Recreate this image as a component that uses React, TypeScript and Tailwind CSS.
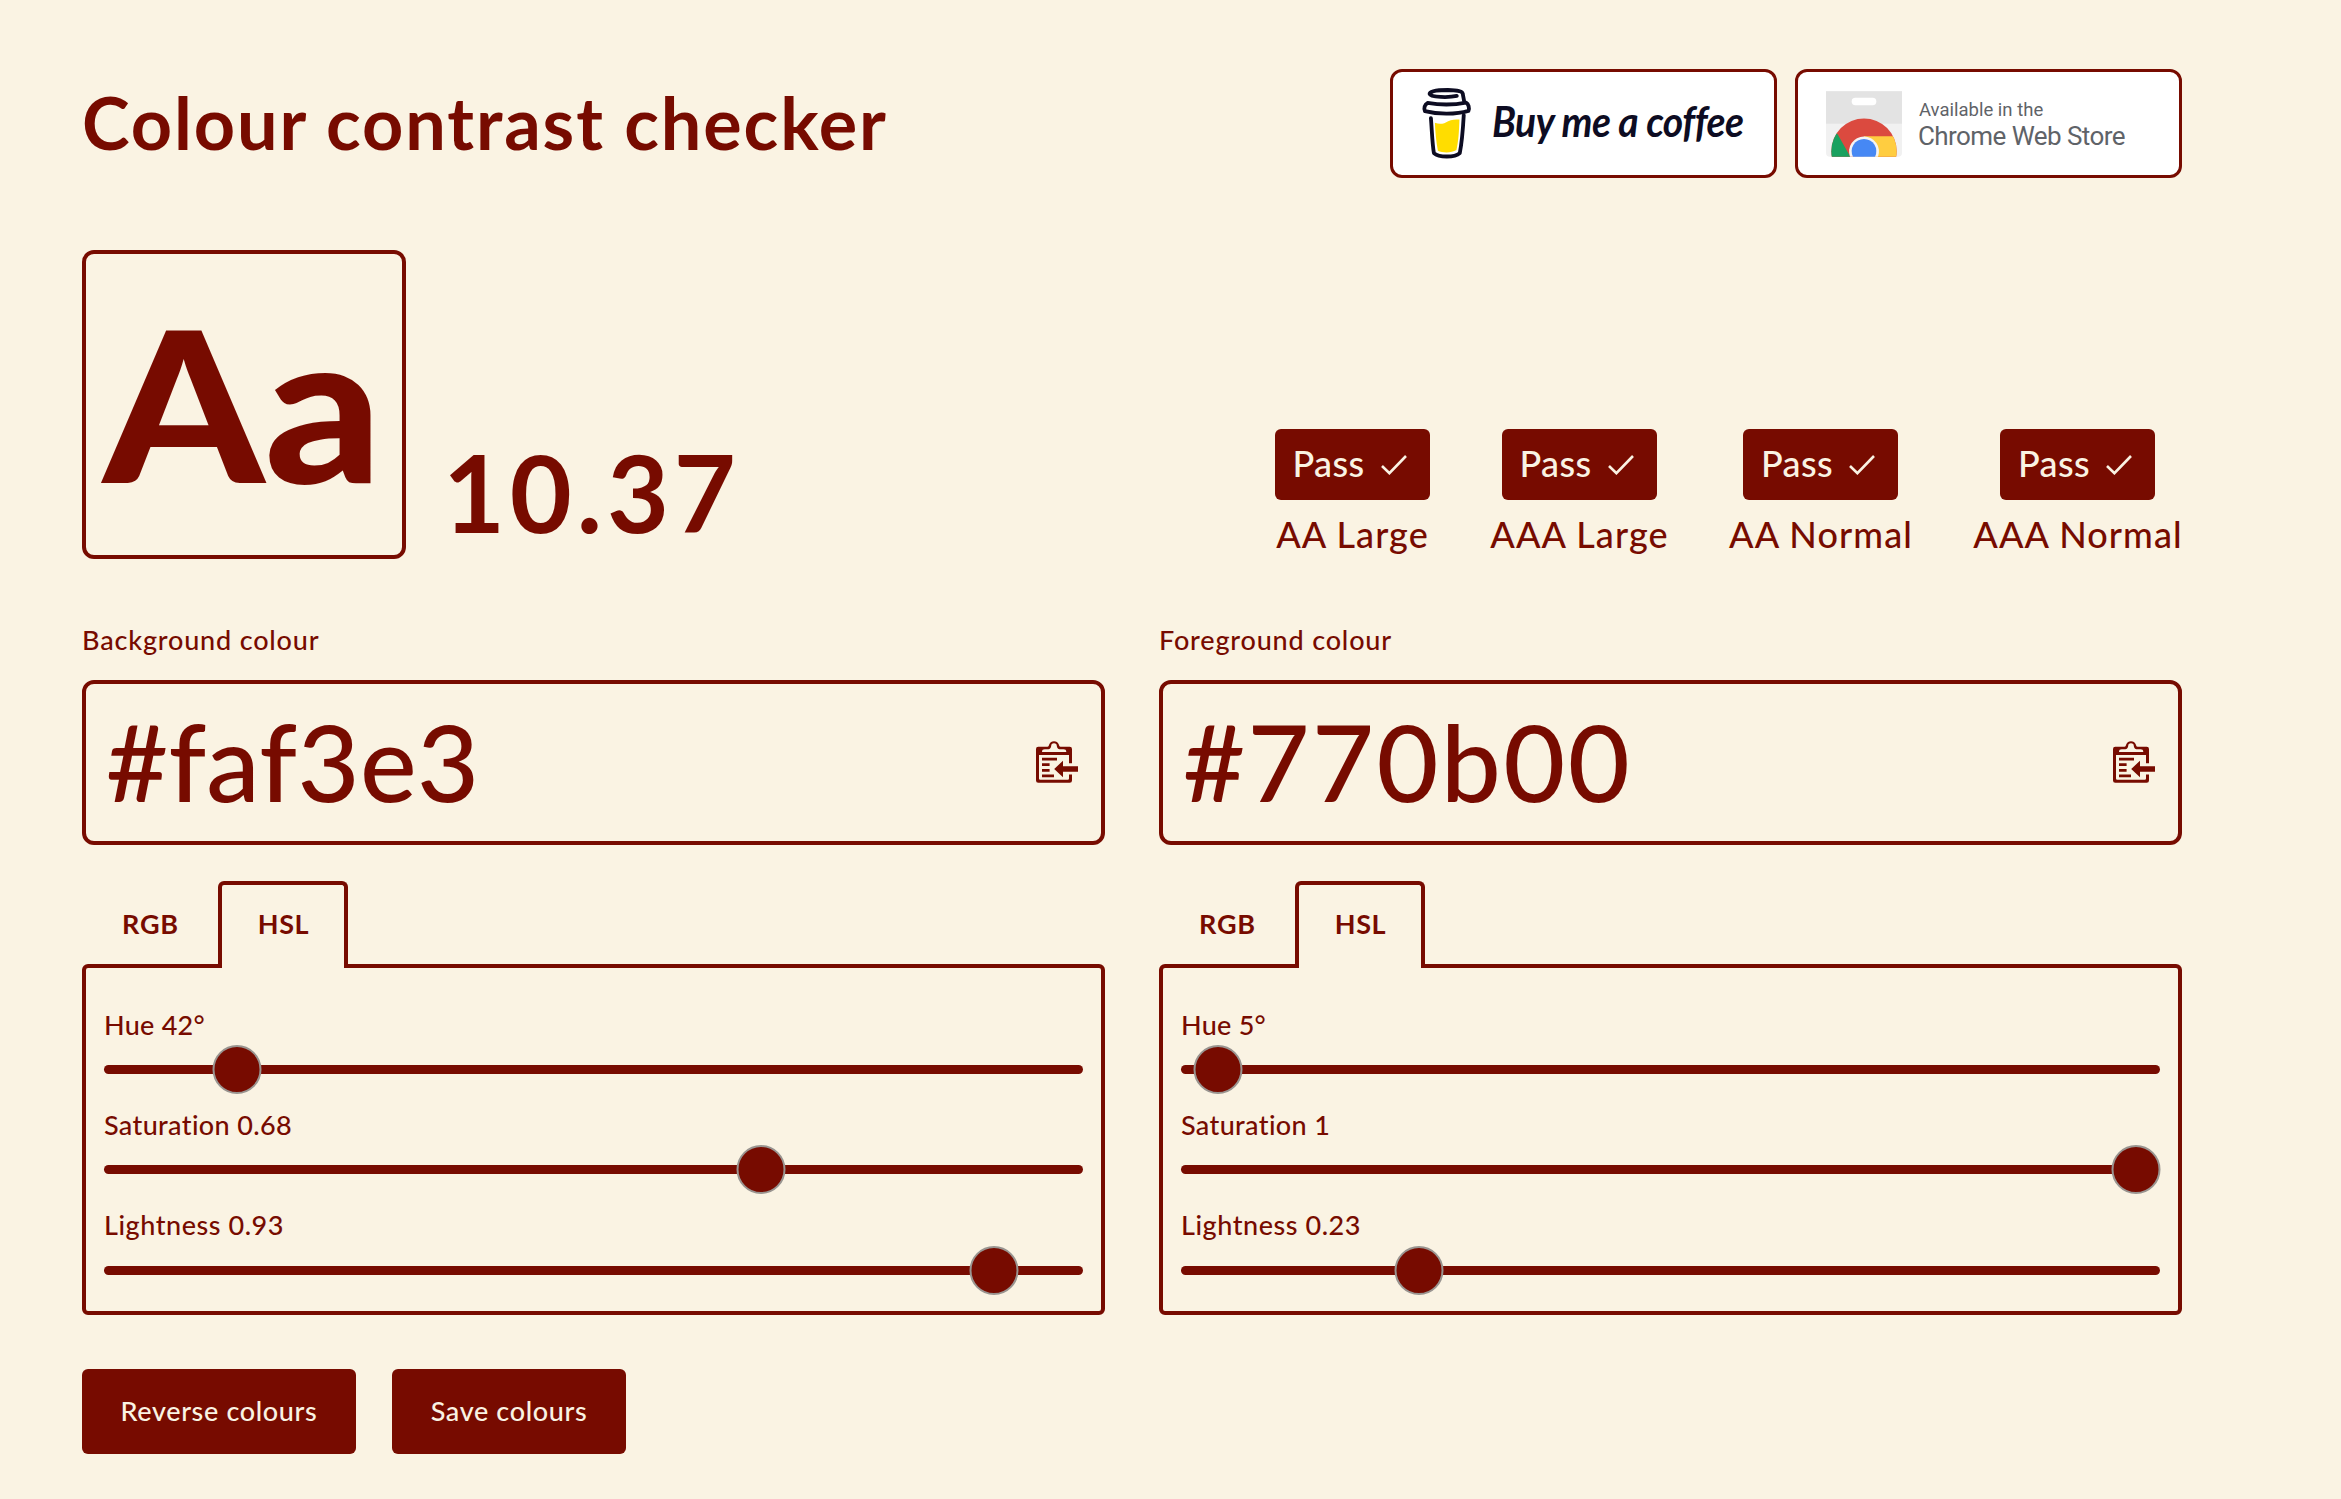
type Slider = { label: string; ratio: number; tracking: string };

type Colour = {
  title: string;
  hex: string;
  hexTracking: string;
  sliders: Slider[];
};

const colours: Colour[] = [
  {
    title: "Background colour",
    hex: "#faf3e3",
    hexTracking: "tracking-[0.4px]",
    sliders: [
      { label: "Hue 42°", ratio: 42 / 360, tracking: "tracking-[0.25px]" },
      { label: "Saturation 0.68", ratio: 0.68, tracking: "tracking-[0.35px]" },
      { label: "Lightness 0.93", ratio: 0.93, tracking: "tracking-[0.55px]" },
    ],
  },
  {
    title: "Foreground colour",
    hex: "#770b00",
    hexTracking: "tracking-[2.4px]",
    sliders: [
      { label: "Hue 5°", ratio: 5 / 360, tracking: "tracking-[0.25px]" },
      { label: "Saturation 1", ratio: 1, tracking: "tracking-[0.35px]" },
      { label: "Lightness 0.23", ratio: 0.23, tracking: "tracking-[0.55px]" },
    ],
  },
];

const levels = [
  { label: "AA Large", width: "w-[154px]" },
  { label: "AAA Large", width: "w-[178px]" },
  { label: "AA Normal", width: "w-[183px]" },
  { label: "AAA Normal", width: "w-[209px]" },
];

function CoffeeCup() {
  return (
    <svg viewBox="125 80 155 220" className="h-[73px] w-[52px] shrink-0" fill="none" stroke="#0d0c22" strokeWidth="11.5" strokeLinecap="round" strokeLinejoin="round">
      <path stroke="none" fill="#ffdd00" d="M166 188C183 194 194 190 206 183C216 178 228 178 240 178C239 212 237 245 231 270C216 279 190 279 175 272C170 245 167 215 166 188Z" />
      <path d="M232 107C210 112 152 112 150 101C150 91 185 89 205 89C235 90 250 93 250 101L254 122" />
      <path d="M144 128C180 134 225 134 260 127C267 131 271 143 267 152C230 163 175 163 136 153C132 145 135 132 144 128Z" />
      <path d="M154 174C157 210 158 250 163 279C178 293 226 293 241 279C247 250 251 200 253 165" />
    </svg>
  );
}

function ChromeBag() {
  return (
    <svg viewBox="123 93 228 197" className="h-[66px] w-[76px] shrink-0">
      <defs>
        <clipPath id="disc">
          <circle cx="237" cy="273" r="98" />
        </clipPath>
      </defs>
      <path fill="#f1f1f1" d="M123 93H351V278Q351 290 339 290H135Q123 290 123 278Z" />
      <path fill="#e3e3e3" d="M123 93H351V191H123Z" />
      <rect x="200" y="113" width="74" height="22" rx="11" fill="#fff" />
      <g clipPath="url(#disc)">
        <rect x="130" y="170" width="214" height="120" fill="#db4a3f" />
        <path fill="#ffcd40" d="M237 228H345V290H237Z" />
        <path fill="#19a15f" d="M157 221L196 290H130V221Z" />
      </g>
      <path fill="#f4f4f4" d="M195 290A45 45 0 1 1 279 290Z" />
      <path fill="#4688f4" d="M204 290A37 37 0 1 1 270 290Z" />
    </svg>
  );
}

function PasteIcon() {
  return (
    <svg viewBox="0 0 42 42" className="size-[42px] shrink-0" fill="#770b00">
      <path
        fillRule="evenodd"
        d="M0 8Q0 5.7 2.3 5.7H11.4C12.8 5.7 12.7 4.6 13.2 3.4A5.3 5.3 0 0 1 22.8 3.4C23.3 4.6 23.2 5.7 24.6 5.7H33.7Q36 5.7 36 8V22.3H33V14H3V37.5Q3 38.8 4.2 38.8H31.8Q33 38.8 33 37.5V33.5H36V39.5Q36 41.8 33.7 41.8H2.3Q0 41.8 0 39.5ZM6 11H30.3C30.3 8.9 29.3 8.3 27.5 8.3H24.5C21.6 8.3 21.2 6.6 20.8 5A2.8 2.8 0 0 0 15.2 5C14.8 6.6 14.4 8.3 11.5 8.3H8.8C7 8.3 6 8.9 6 11Z"
      />
      <path d="M6 16.7H21V19.4H6ZM6 22.3H13.6V25H6ZM6 28H13.6V30.7H6ZM6 33.6H18V36.3H6Z" />
      <path d="M18.2 28L27 19.7V25.3H42V30.7H27V36.3Z" />
    </svg>
  );
}

function ColourPanel({ title, hex, hexTracking, sliders }: Colour) {
  return (
    <div className="flex flex-col">
      <div className="mb-5 h-10 text-[27px] leading-10 tracking-[0.82px]">{title}</div>
      <div className="flex h-[165px] items-center justify-between rounded-xl border-4 border-[#770b00] pr-[23px] pb-px pl-5">
        <span className={`pb-[3px] text-[107px] leading-[130px] ${hexTracking}`}>{hex}</span>
        <PasteIcon />
      </div>
      <div className="relative z-10 mt-9 -mb-1 flex h-[87px] text-[27px] font-bold">
        <div className="flex w-[136px] items-center justify-center pb-px pl-px tracking-[0.8px]">RGB</div>
        <div className="flex w-[130px] items-center justify-center rounded-t-md border-4 border-b-0 border-[#770b00] bg-[#faf3e3] pb-[5px] pl-px tracking-[0.6px]">
          HSL
        </div>
      </div>
      <div className="flex h-[351px] flex-col gap-[11px] rounded-md border-4 border-[#770b00] px-[18px] pt-[37px]">
        {sliders.map((s) => (
          <div key={s.label} className="group flex flex-col">
            <div className={`h-10 text-[27px] leading-10 ${s.tracking}`}>{s.label}</div>
            <div className="relative flex h-[49px] items-center px-6 group-last:mt-px">
              <div className="absolute inset-x-0 top-5 h-[9px] rounded-full bg-[#770b00]" />
              <div className="relative h-[49px] grow">
                <div
                  className="absolute top-0 size-[49px] -translate-x-1/2 rounded-full border-2 border-[#999490] bg-[#770b00]"
                  style={{ left: `${s.ratio * 100}%` }}
                />
              </div>
            </div>
          </div>
        ))}
      </div>
    </div>
  );
}

export default function App() {
  return (
    <div className="min-h-[1499px] bg-[#faf3e3] pt-[69px] pl-[82px] font-['Lato',sans-serif] font-medium text-[#770b00]">
      <div className="flex w-[2100px] flex-col">
        <header className="flex h-[109px] items-center justify-between">
          <h1 className="pb-[3px] text-[72px] leading-[86px] font-bold tracking-[1.88px]">Colour contrast checker</h1>
          <div className="flex gap-[18px]">
            <a className="flex h-[109px] w-[387px] items-center overflow-hidden rounded-xl border-[3px] border-[#770b00] bg-white pl-[28px]">
              <CoffeeCup />
              <span className="ml-[19px] origin-left scale-x-[0.93] pb-[5px] text-[42px] leading-[60px] font-bold tracking-[-0.6px] whitespace-nowrap text-[#0d0c22] italic">
                Buy me a coffee
              </span>
            </a>
            <a className="flex h-[109px] w-[387px] items-center rounded-xl border-[3px] border-[#770b00] bg-white pl-[28px]">
              <ChromeBag />
              <span className="ml-[16px] flex flex-col pb-[2px] font-['Roboto',sans-serif] font-normal whitespace-nowrap text-[#5f6368]">
                <span className="pl-px text-[18.5px] leading-[26px]">Available in the</span>
                <span className="text-[26px] leading-[26px] tracking-[-0.57px]">Chrome Web Store</span>
              </span>
            </a>
          </div>
        </header>

        <section className="mt-[72px] flex h-[309px] items-end">
          <div className="flex h-[309px] w-[324px] items-center rounded-xl border-4 border-[#770b00] pb-[6px] pl-[17px]">
            <span className="origin-left scale-x-[1.095] text-[210px] leading-[260px] font-black">Aa</span>
          </div>
          <div className="mb-[14px] ml-[37px] text-[107px] leading-[107px] font-bold tracking-[4.8px]">10.37</div>
          <div className="ml-auto flex gap-[61px]">
            {levels.map((l) => (
              <div key={l.label} className={`flex flex-col items-center gap-[9px] ${l.width}`}>
                <div className="flex h-[71px] w-[155px] items-center rounded-md bg-[#770b00] pl-[18px] text-[#faf3e3]">
                  <span className="pb-[3px] text-[36px] leading-[44px] tracking-[0.4px]">Pass</span>
                  <svg viewBox="0 0 26 20" className="ml-[16px] h-5 w-[26px]" fill="none" stroke="currentColor" strokeWidth="2.6">
                    <path d="M1 11L8.4 18.2L25 1" />
                  </svg>
                </div>
                <div className="pl-px text-[36px] leading-[50px] tracking-[1.1px] whitespace-nowrap">{l.label}</div>
              </div>
            ))}
          </div>
        </section>

        <section className="mt-[61px] grid grid-cols-2 gap-x-[54px]">
          {colours.map((c) => (
            <ColourPanel key={c.title} {...c} />
          ))}
        </section>

        <footer className="mt-[54px] flex gap-9 text-[27px] tracking-[0.65px] text-[#faf3e3]">
          <button className="h-[85px] w-[274px] rounded-md bg-[#770b00]">Reverse colours</button>
          <button className="h-[85px] w-[234px] rounded-md bg-[#770b00]">Save colours</button>
        </footer>
      </div>
    </div>
  );
}
